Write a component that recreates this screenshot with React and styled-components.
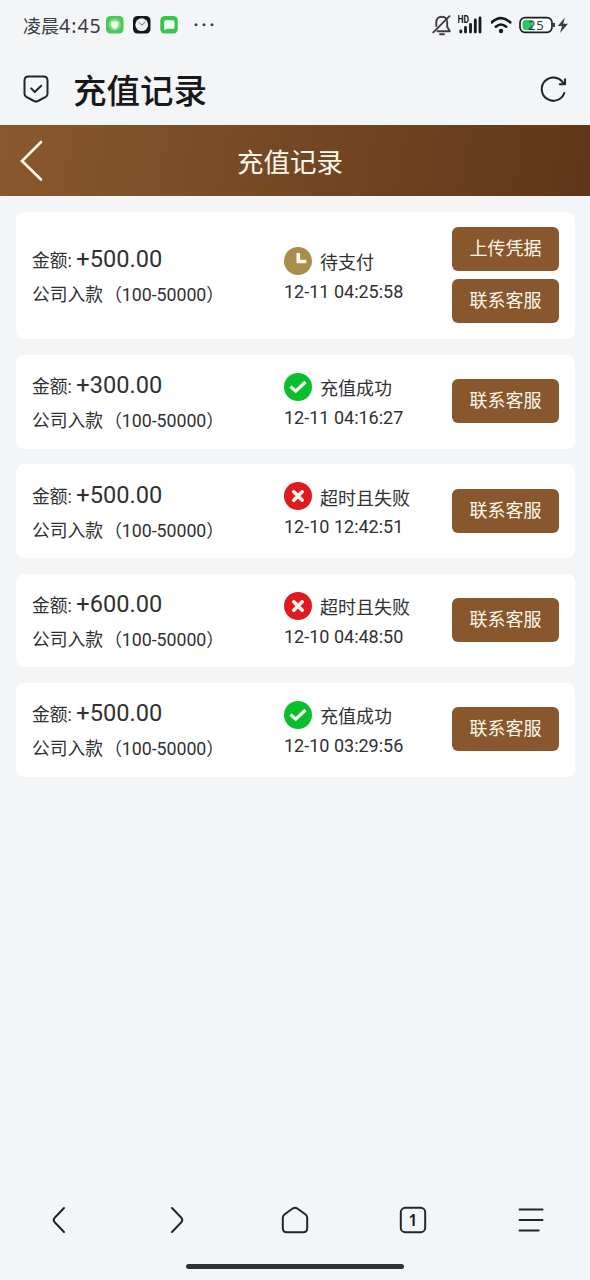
import React from 'react';
import styled, { createGlobalStyle } from 'styled-components';

const GlobalStyles = createGlobalStyle`
	* { box-sizing: border-box; }
	body {
		margin: 0;
		background: #f4f5f7;
		color: #303133;
		font-family: Roboto, 'Noto Sans CJK SC', sans-serif;
	}
	svg { display: block; flex: none; }
`;

const Page = styled.div`
	display: flex;
	flex-direction: column;
	width: 590px;
	height: 1280px;
	overflow: hidden;
`;

const StatusBar = styled.div`
	display: flex;
	align-items: center;
	justify-content: space-between;
	height: 50px;
	padding: 0 21px 0 23px;
`;

const StatusGroup = styled.div`
	display: flex;
	align-items: center;
	gap: ${({ $gap }) => $gap}px;
`;

const Clock = styled.span`
	width: 78px;
	padding-top: 1px;
	color: #3c3d40;
	font-family: 'Noto Sans', 'Noto Sans CJK SC', sans-serif;
	font-size: 18px;
	line-height: 24px;
	white-space: nowrap;
`;

const ClockDigits = styled.span`
	font-size: 19.5px;
	letter-spacing: 1px;
`;

const TitleBar = styled.div`
	display: flex;
	align-items: center;
	height: 75px;
	padding: 2px 22px 0;
`;

const PageTitle = styled.h1`
	flex: 1;
	margin: 0 0 0 23px;
	padding-top: 6px;
	color: #17181a;
	font-size: 33.5px;
	font-weight: 500;
	line-height: 44px;
`;

const Header = styled.header`
	display: grid;
	grid-template-columns: 60px 1fr 70px;
	align-items: center;
	height: 71px;
	background: linear-gradient(100deg, #8a582e 0%, #5e371a 100%);
	color: #fff8ec;
`;

const HeaderTitle = styled.div`
	padding-top: 4px;
	font-size: 26.5px;
	line-height: 36px;
	text-align: center;
`;

const List = styled.main`
	display: flex;
	flex: 1;
	flex-direction: column;
	gap: 15.7px;
	padding: 16px 15px 0 16px;
`;

const Card = styled.section`
	display: grid;
	grid-template-columns: 251px 1fr 107px;
	align-items: center;
	height: ${({ $tall }) => ($tall ? 127.3 : 93.7)}px;
	padding: 0 16px;
	border-radius: 8px;
	background: #fff;
`;

const Info = styled.div`
	padding-top: 2.6px;
	font-size: 17.8px;
	line-height: 36px;
	white-space: nowrap;
`;

const AmountLine = styled.div`
	height: 36px;
`;

const Amount = styled.span`
	font-size: 23.6px;
`;

const Limit = styled.span`
	margin-left: 1px;
	letter-spacing: -0.05px;
`;

const State = styled.div`
	padding-left: 1px;
	font-size: 18px;
	line-height: 30px;
	white-space: nowrap;
`;

const StateLine = styled.div`
	display: flex;
	align-items: center;
	gap: 8px;
	height: 32px;
`;

const StateLabel = styled.span`
	padding-top: 5px;
`;

const Actions = styled.div`
	display: flex;
	flex-direction: column;
	gap: 8px;
	padding-bottom: 1px;
`;

const Button = styled.button`
	height: 44px;
	padding: 0;
	border: 0;
	border-radius: 6px;
	background: #89572d;
	color: #fff8ec;
	font-family: inherit;
	font-size: 18px;
	line-height: 26px;
`;

const BottomNav = styled.nav`
	display: grid;
	grid-template-columns: repeat(5, 118px);
	place-items: center;
	height: 80px;
`;

const HomeIndicator = styled.div`
	align-self: center;
	width: 218px;
	height: 5px;
	margin: 4px 0 11px;
	border-radius: 3px;
	background: #303134;
`;

const records = [
	{ amount: '+500.00', state: 'pending', time: '12-11 04:25:58' },
	{ amount: '+300.00', state: 'success', time: '12-11 04:16:27' },
	{ amount: '+500.00', state: 'failed', time: '12-10 12:42:51' },
	{ amount: '+600.00', state: 'failed', time: '12-10 04:48:50' },
	{ amount: '+500.00', state: 'success', time: '12-10 03:29:56' }
];

const states = {
	pending: { label: '待支付', color: '#aa8c4b', path: 'M14.3 6v8.5h8', width: 3.6 },
	success: { label: '充值成功', color: '#09c02c', path: 'M6.5 13.5l5.3 4.7 9.7-9.2', width: 3.2 },
	failed: { label: '超时且失败', color: '#dc1c20', path: 'M9.8 9.8l8.4 8.4M18.2 9.8l-8.4 8.4', width: 3.6 }
};

function StateIcon({ state }) {
	const { color, path, width } = states[state];
	return (
		<svg width="28" height="28" viewBox="0 0 28 28" fill="none">
			<circle cx="14" cy="14" r="14" fill={color} />
			<path d={path} stroke="#fff8f0" strokeWidth={width} strokeLinecap={state === 'failed' ? 'round' : 'butt'} />
		</svg>
	);
}

function AppIcons() {
	return (
		<svg width="112" height="20" viewBox="0 0 112 20">
			<rect x="1" y="1" width="17.5" height="17.5" rx="4.5" fill="#45c957" />
			<circle cx="9.7" cy="9.7" r="6.2" fill="#79df82" />
			<path d="M6 7.1q3.7-1.6 7.4 0v3.3q-.8 2.3-3.7 3.8Q6.8 12.7 6 10.4z" fill="#f5fff2" />
			<rect x="28" y="1" width="17.5" height="17.5" rx="4.5" fill="#15171a" />
			<circle cx="36.7" cy="9.7" r="6.4" fill="#edf1f3" />
			<path d="M33.8 7.3l2.9 2.9 3.7-3.2" fill="none" stroke="#68737a" strokeWidth="1" />
			<rect x="55.3" y="1" width="17.5" height="17.5" rx="4.5" fill="#36c748" />
			<path d="M60.5 5.3h7.5q1.5 0 1.5 1.5v5.5q0 1.5-1.5 1.5h-6l-2.8 1.3V6.8q0-1.5 1.3-1.5z" fill="#f8fff7" />
			<g fill="#424346">
				<circle cx="91" cy="9.7" r="1.5" />
				<circle cx="99" cy="9.7" r="1.5" />
				<circle cx="107" cy="9.7" r="1.5" />
			</g>
		</svg>
	);
}

function MuteIcon() {
	return (
		<svg width="20" height="22" viewBox="0 0 20 22" fill="none" stroke="#3c3d41" strokeWidth="1.9" strokeLinecap="round" strokeLinejoin="round">
			<path d="M4.3 12V8.5C4.3 4.6 6.2 2.8 9.7 2.8s5.5 1.8 5.5 5.7v4.3l2.6 4.5H5.5" />
			<path d="M17.5 2.2L1.3 18.4M8 20.2h4" />
		</svg>
	);
}

function SignalIcon() {
	return (
		<svg width="26" height="20" viewBox="0 0 26 20" fill="none" stroke="#17181a">
			<text x="-0.5" y="7.6" fill="#17181a" stroke="none" fontSize="10" fontWeight="700" fontFamily="Roboto, sans-serif" textLength="11.5" lengthAdjust="spacingAndGlyphs">HD</text>
			<path d="M2.8 16v1M7.5 12.5V17M12.5 9.5V17M17.3 5v12M22 3v14" strokeWidth="2.8" strokeLinecap="round" />
		</svg>
	);
}

function WifiIcon() {
	return (
		<svg width="22" height="18" viewBox="0 0 22 18" fill="none" stroke="#17181a" strokeWidth="2.5" strokeLinecap="round">
			<path d="M0.6 6.5Q10-2.3 19.400 6.5M4.800 10.800q5.200-4.500 10.400 0" />
			<circle cx="10" cy="15" r="2.200" fill="#17181a" stroke="none" />
		</svg>
	);
}

function BatteryIcon() {
	return (
		<svg width="50" height="18" viewBox="0 0 50 18">
			<rect x="1" y="1.7" width="32" height="14.6" rx="5" fill="#f8fbf8" stroke="#1d1e20" strokeWidth="1.7" />
			<path d="M7 4h6.500v10H7q-3.500 0-3.500-3V7q0-3 3.500-3z" fill="#2bc761" />
			<path d="M35 7v4" stroke="#1d1e20" strokeWidth="1.7" />
			<text x="9" y="13.600" fill="#35383a" fontSize="13" fontFamily="'Noto Sans', sans-serif" letterSpacing="0.7">25</text>
			<path d="M45.800 1.500l-7 8.500h4.200l-2 7 8-9.200H44.300z" fill="#3c3d41" />
		</svg>
	);
}

function ShieldIcon() {
	return (
		<svg width="28" height="30" viewBox="0 0 28 30" fill="none" stroke="#25262a" strokeWidth="2" strokeLinecap="round" strokeLinejoin="round">
			<path d="M6.5 2.5h15q4 0 4 4v13.3q0 2-1.7 3L16 27q-2 1-4 0l-7.8-4.2q-1.7-1-1.7-3V6.5q0-4 4-4z" />
			<path d="M9.2 14.4l3.6 3.6 6.4-6.3" />
		</svg>
	);
}

function RefreshIcon() {
	return (
		<svg width="30" height="30" viewBox="0 0 30 30" fill="none" stroke="#25262a" strokeWidth="2.1" strokeLinecap="round" strokeLinejoin="round">
			<path d="M26.3 19A11.6 11.6 0 1 1 25.3 9.2" />
			<path d="M27 5.2v5h-5.2" />
		</svg>
	);
}

function Record({ amount, state, time }) {
	const pending = state === 'pending';

	return (
		<Card $tall={pending}>
			<Info>
				<AmountLine>金额: <Amount>{amount}</Amount></AmountLine>
				<div>公司入款<Limit>（100-50000）</Limit></div>
			</Info>
			<State>
				<StateLine>
					<StateIcon state={state} />
					<StateLabel>{states[state].label}</StateLabel>
				</StateLine>
				<div>{time}</div>
			</State>
			<Actions>
				{pending && <Button>上传凭据</Button>}
				<Button>联系客服</Button>
			</Actions>
		</Card>
	);
}

function Navigation() {
	const stroke = { fill: 'none', stroke: '#25262a', strokeWidth: 2, strokeLinecap: 'round', strokeLinejoin: 'round' };

	return (
		<BottomNav>
			<svg width="28" height="30" viewBox="0 0 28 30" {...stroke}>
				<path d="M19 3L9.7 12.7q-2 2.3 0 4.6L19 27" />
			</svg>
			<svg width="28" height="30" viewBox="0 0 28 30" {...stroke}>
				<path d="M9 3l9.3 9.7q2 2.3 0 4.6L9 27" />
			</svg>
			<svg width="28" height="30" viewBox="0 0 28 30" {...stroke}>
				<path d="M12 3.3q2-1.3 4 0l8.3 6q1.9 1.4 1.9 3.7v10.3q0 4-4 4H5.8q-4 0-4-4V13q0-2.3 1.9-3.7z" />
			</svg>
			<svg width="28" height="30" viewBox="0 0 28 30" {...stroke}>
				<rect x="1.8" y="2.8" width="24.4" height="24.4" rx="4.5" />
				<text x="14" y="20.5" fill="#17181a" stroke="none" fontSize="15.5" fontWeight="600" fontFamily="'Noto Sans', sans-serif" textAnchor="middle">1</text>
			</svg>
			<svg width="28" height="30" viewBox="0 0 28 30" {...stroke}>
				<path d="M2.5 4.5h23M2.5 15h23M2.5 25.5h19.2" />
			</svg>
		</BottomNav>
	);
}

export default function App() {
	return (
		<Page>
			<GlobalStyles />
			<StatusBar>
				<StatusGroup $gap={4}>
					<Clock>凌晨<ClockDigits>4:45</ClockDigits></Clock>
					<AppIcons />
				</StatusGroup>
				<StatusGroup $gap={6.5}>
					<MuteIcon />
					<SignalIcon />
					<WifiIcon />
					<BatteryIcon />
				</StatusGroup>
			</StatusBar>
			<TitleBar>
				<ShieldIcon />
				<PageTitle>充值记录</PageTitle>
				<RefreshIcon />
			</TitleBar>
			<Header>
				<svg width="60" height="50" viewBox="0 0 60 50" fill="none" stroke="#fff8ec" strokeWidth="2.7" strokeLinecap="round" strokeLinejoin="miter">
					<path d="M41 6L22 25l19 18.500" />
				</svg>
				<HeaderTitle>充值记录</HeaderTitle>
			</Header>
			<List>
				{records.map((record) => <Record key={record.time} {...record} />)}
			</List>
			<Navigation />
			<HomeIndicator />
		</Page>
	);
}
